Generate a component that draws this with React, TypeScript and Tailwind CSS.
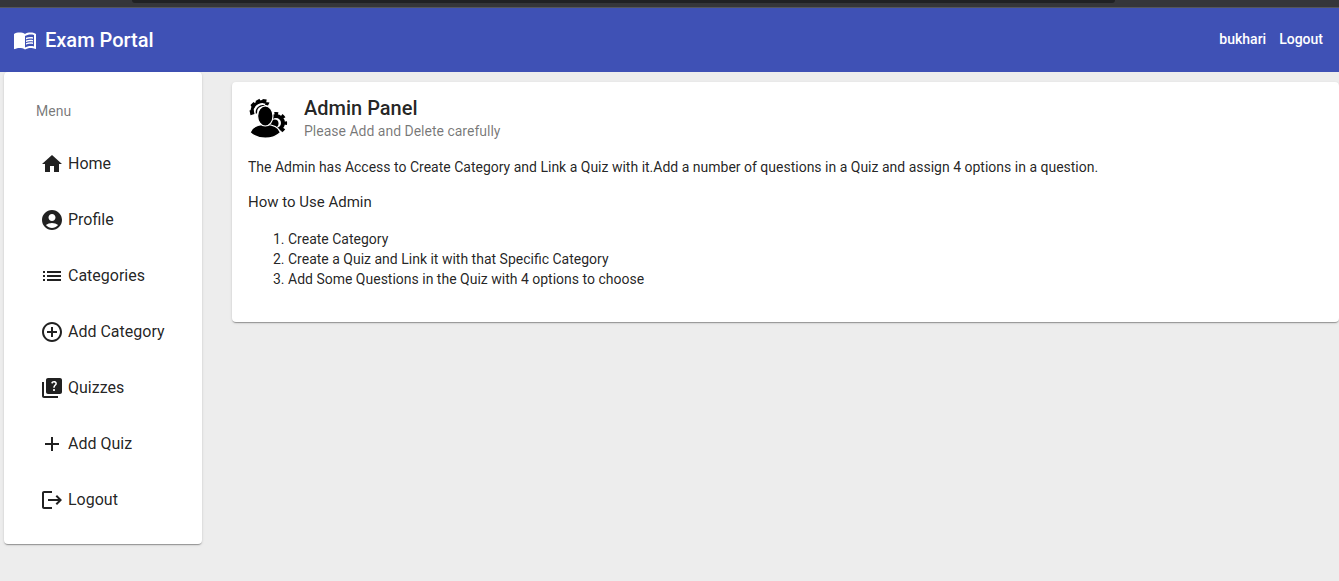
import React from "react";
import {
  MdAccountCircle,
  MdAdd,
  MdAddCircleOutline,
  MdHome,
  MdList,
  MdLogout,
  MdMenuBook,
  MdQuiz,
} from "react-icons/md";
import type { IconType } from "react-icons";

const menu: { label: string; icon: IconType }[] = [
  { label: "Home", icon: MdHome },
  { label: "Profile", icon: MdAccountCircle },
  { label: "Categories", icon: MdList },
  { label: "Add Category", icon: MdAddCircleOutline },
  { label: "Quizzes", icon: MdQuiz },
  { label: "Add Quiz", icon: MdAdd },
  { label: "Logout", icon: MdLogout },
];

const steps = [
  "Create Category",
  "Create a Quiz and Link it with that Specific Category",
  "Add Some Questions in the Quiz with 4 options to choose",
];

const cardShadow =
  "shadow-[0_2px_1px_-1px_rgba(0,0,0,0.2),0_1px_1px_0_rgba(0,0,0,0.14),0_1px_3px_0_rgba(0,0,0,0.12)]";

function AdminAvatar() {
  return (
    <svg viewBox="0 0 40 40" className="size-10 shrink-0" aria-hidden="true">
      {/* upper left gear, only its outer quarter shows */}
      <g fill="none" stroke="#000">
        <path d="M4 15A10.500 10.500 0 0 1 17.500 4" strokeWidth="3" />
        <path d="M8.500 15.500A6.500 6.500 0 0 1 16.500 7.800" strokeWidth="1.300" />
      </g>
      <path
        d="M1.500 12.500l4-1 1 4.500-4 1.200zM2.500 7l3-3 3 2.500-4 4zM7.500 3L11.500.800l1.500 4-4 1.500zM14.500 1l4.200.500-.700 4-3.500-.500zM17.500 4l4 .500-1.500 3-3-.800z"
        fill="#000"
      />
      {/* right gear */}
      <g fill="none" stroke="#000">
        <circle cx="28" cy="25" r="7" strokeWidth="4" />
        <circle cx="28" cy="25" r="9.500" strokeWidth="3.200" strokeDasharray="3.730 3.730" strokeDashoffset="1.860" />
      </g>
      <circle cx="26.500" cy="25.500" r="4" fill="#000" />
      <path
        d="M17.300 26.500c7.500 0 13.200 2.600 15.200 8-3.700 3.700-9 5.700-15.200 5.700S5.700 38.200 2 34.500c2-5.400 7.800-8 15.300-8z"
        fill="#000"
        stroke="#fff"
        strokeWidth="1.200"
      />
      <ellipse cx="17.300" cy="18" rx="7.700" ry="10" fill="#000" stroke="#fff" strokeWidth="1.200" />
    </svg>
  );
}

export default function App() {
  return (
    <div className="flex min-h-screen flex-col overflow-hidden bg-[#ededed] font-['Roboto',sans-serif] text-sm text-black/87">
      <div className="h-2 border-b border-[#55565a] bg-[#35363a]">
        <div className="mr-56 ml-[132px] h-[3px] rounded-b-lg bg-[#202124]" />
      </div>

      <header className="flex h-16 items-center justify-between bg-[#3f51b5] px-4 font-medium text-white">
        <a href="#home" className="-ml-[3px] flex items-center gap-2 text-xl">
          <MdMenuBook className="size-6" />
          Exam Portal
        </a>
        <nav className="flex gap-[13px] pb-0.5" aria-label="Account">
          <a href="#profile">bukhari</a>
          <a href="#logout">Logout</a>
        </nav>
      </header>

      <div className="flex items-start">
        <aside className={`ml-1 w-[198px] shrink-0 rounded-sm bg-white p-4 ${cardShadow}`}>
          <h2 className="px-4 pt-[15px] pb-[17px] text-sm leading-4 text-black/54">Menu</h2>
          <nav aria-label="Menu">
            {menu.map(({ label, icon: Icon }) => (
              <a
                key={label}
                href={"#" + label.toLowerCase().replace(" ", "-")}
                className="flex h-14 items-center gap-1 pl-5 text-base whitespace-nowrap"
              >
                <Icon className="size-6 shrink-0" />
                {label}
              </a>
            ))}
          </nav>
        </aside>

        <main className={`mt-[10px] ml-[30px] flex-1 rounded-sm bg-white p-4 ${cardShadow}`}>
          <div className="flex gap-4">
            <AdminAvatar />
            <div>
              <h1 className="text-xl leading-5 font-medium">Admin Panel</h1>
              <p className="mt-[3px] leading-5 text-black/54">Please Add and Delete carefully</p>
            </div>
          </div>
          <p className="mt-4 leading-5">
            The Admin has Access to Create Category and Link a Quiz with it.Add a number of questions in a Quiz and
            assign 4 options in a question.
          </p>
          <h2 className="mt-[13px] text-[15px] leading-6">How to Use Admin</h2>
          <ol className="mt-[15px] mb-[17px] list-decimal pl-10 leading-5">
            {steps.map((step) => (
              <li key={step}>{step}</li>
            ))}
          </ol>
        </main>
      </div>
    </div>
  );
}
